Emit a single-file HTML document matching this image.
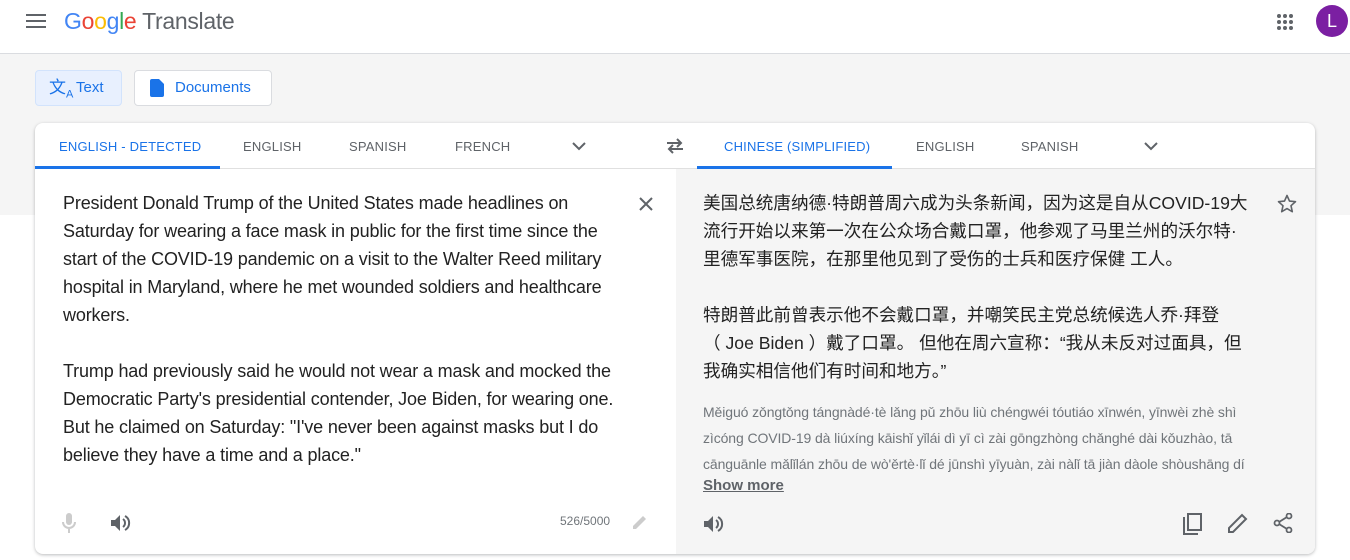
<!DOCTYPE html>
<html><head><meta charset="utf-8">
<style>
*{margin:0;padding:0;box-sizing:border-box}
body{width:1350px;height:560px;overflow:hidden;background:#fff;font-family:"Liberation Sans",Arial,sans-serif;position:relative}
.abs{position:absolute}
.band{left:0;top:53px;width:1350px;height:162px;background:#f5f5f5;border-top:1px solid #dadce0}
.btn{height:36px;top:70px;border-radius:4px;font-size:15px;line-height:34px;color:#1a73e8}
.card{left:35px;top:123px;width:1280px;height:431px;background:#fff;border-radius:8px;box-shadow:0 1px 3px rgba(60,64,67,.35);overflow:hidden}
.tab{top:16px;font-size:13px;color:#5f6368;letter-spacing:.2px;font-weight:500}
.tab.a{color:#1a73e8}
.src{left:28px;top:66px;font-size:18px;line-height:28px;color:#222;width:570px;letter-spacing:-.15px}
.tgt{font-family:"Liberation Sans","Noto Sans CJK SC",sans-serif;font-size:17.6px;line-height:28px;color:#222}
.pin{font-size:14px;line-height:26px;color:#70757a;letter-spacing:-.1px}
</style></head><body>
<svg class="abs" style="left:26px;top:13px" width="20" height="16"><rect y="1" width="20" height="2" fill="#5f6368"/><rect y="7" width="20" height="2" fill="#5f6368"/><rect y="13" width="20" height="2" fill="#5f6368"/></svg>
<div class="abs" style="left:64px;top:8px;font-size:23px;letter-spacing:-.3px"><span style="color:#4285f4">G</span><span style="color:#ea4335">o</span><span style="color:#fbbc05">o</span><span style="color:#4285f4">g</span><span style="color:#34a853">l</span><span style="color:#ea4335">e</span> <span style="color:#5f6368">Translate</span></div>
<svg class="abs" style="left:1276px;top:13px" width="18" height="18"><g fill="#5f6368"><circle cx="3" cy="3" r="2"/><circle cx="9" cy="3" r="2"/><circle cx="15" cy="3" r="2"/><circle cx="3" cy="9" r="2"/><circle cx="9" cy="9" r="2"/><circle cx="15" cy="9" r="2"/><circle cx="3" cy="15" r="2"/><circle cx="9" cy="15" r="2"/><circle cx="15" cy="15" r="2"/></g></svg>
<div class="abs" style="left:1316px;top:5px;width:32px;height:32px;border-radius:50%;background:#7b1fa2;color:#fff;font-size:18px;text-align:center;line-height:32px">L</div>
<div class="abs band"></div>
<div class="abs btn" style="left:35px;width:87px;background:#e8f0fe;border:1px solid #d2e3fc"><span style="position:absolute;left:13px;top:0;font-size:17px">文<sub style="font-size:11px">A</sub></span><span style="position:absolute;left:40px">Text</span></div>
<div class="abs btn" style="left:134px;width:138px;background:#fff;border:1px solid #dadce0"><svg style="position:absolute;left:15px;top:8px" width="14" height="18"><path d="M2 0h7l5 5v11a2 2 0 0 1-2 2H2a2 2 0 0 1-2-2V2a2 2 0 0 1 2-2z" fill="#1a73e8"/></svg><span style="position:absolute;left:40px">Documents</span></div>
<div class="abs card">
 <div class="abs" style="left:0;top:45px;width:1280px;height:1px;background:#e0e0e0"></div>
 <div class="abs tab a" style="left:24px">ENGLISH - DETECTED</div>
 <div class="abs" style="left:0;top:43px;width:185px;height:3px;background:#1a73e8"></div>
 <div class="abs tab" style="left:208px">ENGLISH</div>
 <div class="abs tab" style="left:314px">SPANISH</div>
 <div class="abs tab" style="left:420px">FRENCH</div>
 <svg class="abs" style="left:537px;top:19px" width="14" height="9"><path d="M1 1l6 6 6-6" stroke="#5f6368" stroke-width="2" fill="none"/></svg>
 <svg class="abs" style="left:630px;top:14px" width="20" height="18"><path d="M2 6h14M12 2l4 4-4 4M18 12H4M8 8l-4 4 4 4" stroke="#5f6368" stroke-width="2" fill="none"/></svg>
 <div class="abs tab a" style="left:689px">CHINESE (SIMPLIFIED)</div>
 <div class="abs" style="left:662px;top:43px;width:195px;height:3px;background:#1a73e8"></div>
 <div class="abs tab" style="left:881px">ENGLISH</div>
 <div class="abs tab" style="left:986px">SPANISH</div>
 <svg class="abs" style="left:1109px;top:19px" width="14" height="9"><path d="M1 1l6 6 6-6" stroke="#5f6368" stroke-width="2" fill="none"/></svg>
 <div class="abs" style="left:641px;top:46px;width:639px;height:385px;background:#f5f5f5"></div>
 <svg class="abs" style="left:604px;top:74px" width="14" height="14"><path d="M1 1l12 12M13 1L1 13" stroke="#5f6368" stroke-width="2"/></svg>
 <div class="abs src">President Donald Trump of the United States made headlines on Saturday for wearing a face mask in public for the first time since the start of the COVID-19 pandemic on a visit to the Walter Reed military hospital in Maryland, where he met wounded soldiers and healthcare workers.<br><br>Trump had previously said he would not wear a mask and mocked the Democratic Party's presidential contender, Joe Biden, for wearing one. But he claimed on Saturday: "I've never been against masks but I do believe they have a time and a place."</div>
 <div class="abs tgt" style="left:668px;top:66px;width:560px">美国总统唐纳德·特朗普周六成为头条新闻，因为这是自从COVID-19大<br>流行开始以来第一次在公众场合戴口罩，他参观了马里兰州的沃尔特·<br>里德军事医院，在那里他见到了受伤的士兵和医疗保健 工人。<br><br>特朗普此前曾表示他不会戴口罩，并嘲笑民主党总统候选人乔·拜登<br>（ Joe Biden ）戴了口罩。 但他在周六宣称：“我从未反对过面具，但<br>我确实相信他们有时间和地方。”</div>
 <svg class="abs" style="left:1242px;top:71px" width="20" height="20"><path d="M10 1.5l2.5 5.6 6 .6-4.5 4 1.3 6-5.3-3.1-5.3 3.1 1.3-6-4.5-4 6-.6z" stroke="#5f6368" stroke-width="1.6" fill="none" stroke-linejoin="round"/></svg>
 <div class="abs pin" style="left:668px;top:276px;width:580px">Měiguó zǒngtǒng tángnàdé·tè lǎng pǔ zhōu liù chéngwéi tóutiáo xīnwén, yīnwèi zhè shì<br>zìcóng COVID-19 dà liúxíng kāishǐ yǐlái dì yī cì zài gōngzhòng chǎnghé dài kǒuzhào, tā<br>cānguānle mǎlǐlán zhōu de wò'ěrtè·lǐ dé jūnshì yīyuàn, zài nàlǐ tā jiàn dàole shòushāng dí</div>
 <div class="abs" style="left:668px;top:354px;font-size:15px;font-weight:bold;color:#5f6368;text-decoration:underline">Show more</div>
 <svg class="abs" style="left:27px;top:390px" width="14" height="20"><rect x="4" y="0" width="6" height="12" rx="3" fill="#ccc"/><path d="M1 9a6 6 0 0 0 12 0M7 15v5" stroke="#ccc" stroke-width="2" fill="none"/></svg>
 <svg class="abs" style="left:76px;top:391px" width="20" height="18"><path d="M0 6h4l5-5v16l-5-5H0z" fill="#5f6368"/><path d="M12 5a5 5 0 0 1 0 8M14 2a8 8 0 0 1 0 14" stroke="#5f6368" stroke-width="2" fill="none"/></svg>
 <div class="abs" style="left:525px;top:391px;font-size:12px;color:#70757a">526/5000</div>
 <svg class="abs" style="left:598px;top:392px" width="14" height="14"><path d="M0 14v-3l10-10 3 3-10 10z" fill="#ccc"/></svg>
 <svg class="abs" style="left:669px;top:392px" width="20" height="18"><path d="M0 6h4l5-5v16l-5-5H0z" fill="#5f6368"/><path d="M12 5a5 5 0 0 1 0 8M14 2a8 8 0 0 1 0 14" stroke="#5f6368" stroke-width="2" fill="none"/></svg>
 <svg class="abs" style="left:1148px;top:390px" width="20" height="22"><path d="M1 4v17h14" stroke="#5f6368" stroke-width="2" fill="none"/><rect x="5" y="1" width="13" height="16" stroke="#5f6368" stroke-width="2" fill="none"/></svg>
 <svg class="abs" style="left:1193px;top:390px" width="20" height="20"><path d="M1 19v-4L14 2l4 4L5 19z" stroke="#5f6368" stroke-width="2" fill="none"/></svg>
 <svg class="abs" style="left:1238px;top:390px" width="20" height="20"><circle cx="16" cy="3" r="2.5" stroke="#5f6368" stroke-width="1.8" fill="none"/><circle cx="4" cy="10" r="2.5" stroke="#5f6368" stroke-width="1.8" fill="none"/><circle cx="16" cy="17" r="2.5" stroke="#5f6368" stroke-width="1.8" fill="none"/><path d="M6 9l8-5M6 11l8 5" stroke="#5f6368" stroke-width="1.8"/></svg>
</div>
</body></html>
